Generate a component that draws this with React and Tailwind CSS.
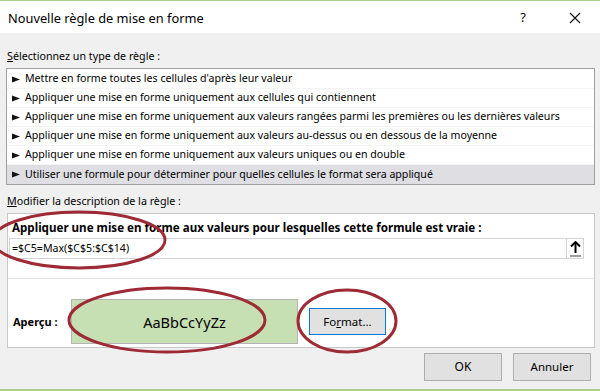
export default function App() {
  const rows = [
    "Mettre en forme toutes les cellules d'après leur valeur",
    "Appliquer une mise en forme uniquement aux cellules qui contiennent",
    "Appliquer une mise en forme uniquement aux valeurs rangées parmi les premières ou les dernières valeurs",
    "Appliquer une mise en forme uniquement aux valeurs au-dessus ou en dessous de la moyenne",
    "Appliquer une mise en forme uniquement aux valeurs uniques ou en double",
    "Utiliser une formule pour déterminer pour quelles cellules le format sera appliqué",
  ];
  return (
    <div className="relative w-[600px] h-[391px] overflow-hidden bg-[#f0f0f0] flex flex-col font-['Noto_Sans',sans-serif] text-[10.6px] text-black">
      <div className="h-[1px] bg-[#a9d08e]" />
      <div className="h-[32px] bg-white flex items-center pl-[8px] pt-[2px]">
        <span className="text-[12.8px] leading-none">Nouvelle règle de mise en forme</span>
        <span className="ml-auto text-[13px] w-[20px] text-center mr-[32px]">?</span>
        <span className="w-[20px] flex justify-center mr-[15px]">
          <svg width="12" height="12" viewBox="0 0 12 12">
            <path d="M1 1L11 11M11 1L1 11" stroke="#111" strokeWidth="1.1" />
          </svg>
        </span>
      </div>
      <div className="flex flex-col pl-[6px] pr-[5px]">
        <div className="mt-[14px] h-[18px] flex items-center pl-[1px] text-[10.7px]">
          <span><span className="underline">S</span>électionnez un type de règle :</span>
        </div>
        <div className="mt-[3px] border border-[#a0a0a0] bg-white pt-[1px] flex flex-col">
          {rows.map((r, i) => (
            <div
              key={i}
              className={`h-[19px] flex items-center pl-[5px] whitespace-nowrap ${i === 5 ? "bg-[#dedee3]" : "border-b border-[#f4f4f4]"}`}
            >
              <svg width="9" height="7" viewBox="0 0 9 7" className="mr-[4px] shrink-0">
                <path d="M0 0.5L8 3.5L0 6.5Z" fill="#111" />
              </svg>
              <span>{r}</span>
            </div>
          ))}
        </div>
        <div className="mt-[7px] h-[18px] flex items-center pl-[1px] text-[10.7px]">
          <span><span className="underline">M</span>odifier la description de la règle :</span>
        </div>
        <div className="mt-[3px] ml-[1px] border border-[#c8c8c8] bg-white flex flex-col">
          <div className="h-[23px] flex items-end pl-[4px] font-bold pb-[1px] text-[11.6px]">
            Appliquer une mise en forme aux valeurs pour lesquelles cette formule est vraie :
          </div>
          <div className="mt-[1px] ml-[1px] mr-[10px] h-[21px] border border-[#d4d4d4] flex items-center">
            <span className="pl-[2px]">=$C5=Max($C$5:$C$14)</span>
            <div className="ml-auto h-full w-[17px] border-l border-[#d4d4d4] flex flex-col items-center justify-center">
              <svg width="11" height="13" viewBox="0 0 11 13">
                <path d="M5.5 1V12" stroke="#000" strokeWidth="2" />
                <path d="M1 5.5L5.5 1L10 5.5" stroke="#000" strokeWidth="2" fill="none" />
              </svg>
              <div className="w-[11px] h-[2px] bg-[#9a9a9a] mt-[1px]" />
            </div>
          </div>
          <div className="mt-[19px] border-t border-[#e4e4e4] h-[69px] flex items-end pl-[5px] pb-[3px]">
            <div className="flex items-center">
              <span className="font-bold w-[58px] text-[11px] pt-[2px]">Aperçu :</span>
              <div className="w-[227px] h-[45px] bg-[#c6e0b4] border border-[#b4b4b4] flex items-center justify-center text-[14.5px] pt-[2px]">
                AaBbCcYyZz
              </div>
              <div className="ml-[11px] w-[77px] h-[27px] bg-[#e1e1e1] border border-[#0078d7] flex items-center justify-center text-[11.5px]">
                <span>Fo<span className="underline">r</span>mat...</span>
              </div>
            </div>
          </div>
        </div>
        <div className="mt-[5px] flex justify-end gap-[11px] pr-[4px]">
          <div className="w-[78px] h-[28px] bg-[#e1e1e1] border border-[#adadad] flex items-center justify-center text-[12px]">OK</div>
          <div className="w-[78px] h-[28px] bg-[#e1e1e1] border border-[#adadad] flex items-center justify-center text-[11.5px]">Annuler</div>
        </div>
      </div>
      <div className="mt-auto h-[2px] bg-[#a9d08e]" />
      <svg className="absolute left-0 top-0 pointer-events-none" width="600" height="391" viewBox="0 0 600 391">
        <ellipse cx="79" cy="240" rx="86" ry="28" fill="none" stroke="#9e2a35" strokeWidth="3" />
        <ellipse cx="167" cy="320" rx="98" ry="32" fill="none" stroke="#9e2a35" strokeWidth="3" />
        <ellipse cx="347" cy="321" rx="49" ry="31" fill="none" stroke="#9e2a35" strokeWidth="3" />
      </svg>
    </div>
  );
}
